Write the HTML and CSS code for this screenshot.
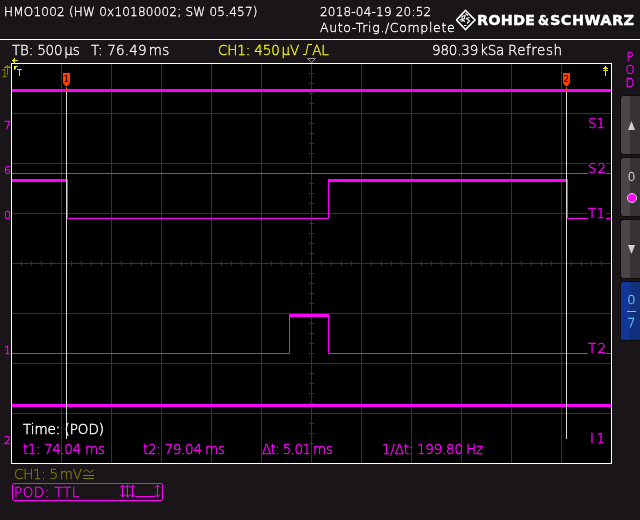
FILE: index.html
```
<!DOCTYPE html>
<html lang="en">
<head>
<meta charset="utf-8">
<title>HMO1002</title>
<link rel="stylesheet" href="styles.css">
</head>
<body>
<header class="header">
  <div class="model">HMO1002 (HW 0x10180002; SW 05.457)</div>
  <div class="state"><div class="date">2018-04-19 20:52</div><div class="trig">Auto-Trig./Complete</div></div>
  <svg class="brand" width="184" height="39" viewBox="456 0 184 39">
    <path class="diamond" d="M465.500 10.500 475 20 465.500 29.500 456.500 20Z"/>
    <path class="diamond-in" d="M462 22V16.500L465 15.500 464.500 18.500 462 19.500 465 21.500M469.500 17.500 466.500 18.500 469.500 21 467 23.500M464 25.500H466.500M465.500 13.500 468 15.500M459.500 20H461"/>
    <text class="logo" x="477" y="25" textLength="58" lengthAdjust="spacing">ROHDE</text>
    <text class="logo" x="538" y="25" textLength="11" lengthAdjust="spacingAndGlyphs">&amp;</text>
    <text class="logo" x="550" y="25" textLength="84" lengthAdjust="spacing">SCHWARZ</text>
  </svg>
</header>
<main class="main">
  <section class="screen">
    <div class="status">
      <span class="tb">TB: 500<i></i>µs</span>
      <span class="tpos">T: 76.49<i></i>ms</span>
      <span class="trigger">CH1: 450<i></i>µV <svg width="9" height="11" viewBox="0 0 9 11"><path d="M0 10.500H3L5 .5H9"/></svg>AL</span>
      <span class="rate">980.39<i></i>kSa</span>
      <span class="mode">Refresh</span>
    </div>
    <svg class="plot" width="612" height="408" viewBox="0 57 612 408">
      <defs>
        <pattern id="grid" x="11" y="63" width="50" height="50" patternUnits="userSpaceOnUse"><path class="grid" d="M.5 0V50M0 .5H50"/></pattern>
        <pattern id="tx" x="11" y="261" width="10" height="5" patternUnits="userSpaceOnUse"><path class="grid" d="M.5 0V5"/></pattern>
        <pattern id="ty" x="309" y="63" width="5" height="10" patternUnits="userSpaceOnUse"><path class="grid" d="M0 .5H5"/></pattern>
      </defs>
      <rect class="bg" x="11" y="63" width="601" height="401"/>
      <rect x="11" y="63" width="601" height="401" fill="url(#grid)"/>
      <rect x="11" y="261" width="601" height="5" fill="url(#tx)"/>
      <rect x="309" y="63" width="5" height="381" fill="url(#ty)"/>
      <g class="bg">
        <rect x="588" y="116" width="18" height="14"/><rect x="588" y="162" width="18" height="13"/>
        <rect x="588" y="207" width="18" height="13"/><rect x="588" y="342" width="18" height="13"/>
      </g>
      <g class="thick"><path d="M12 90.500H611M12 180.500H67M328 180.500H567M289 315.500H329M12 405.500H611"/></g>
      <g class="thin"><path d="M12 173.500H588M606 173.500H611M67.500 179V218.500H328.500V179M567.500 179V218.500H588M606 218.500H611M12 353.500H289.500V314M328.500 314V353.500H588M606 353.500H611"/></g>
      <g class="cursor"><path d="M66.500 92V439M566.500 92V439"/></g>
      <rect class="frame" x="11.500" y="63.500" width="600" height="400"/>
      <g class="flag"><path d="M63 73H70V83L67.500 86H65.500L63 83ZM563 73H570V83L567.500 86H565.500L563 83ZM66 87H67V92H66ZM566 87H567V92H566Z"/></g>
      <g class="flagtext"><text x="63.500" y="82">1</text><text x="563.500" y="82">2</text></g>
      <path class="pointer" d="M307.500 58.500H315.500L311.500 62.500Z"/>
      <g class="labels">
        <text x="588" y="128" textLength="17">S1</text><text x="588" y="173" textLength="18">S2</text>
        <text x="588" y="218" textLength="17">T1</text><text x="588" y="353" textLength="18">T2</text>
        <text x="590" y="443" textLength="15">I1</text>
      </g>
      <g class="bits">
        <text x="4" y="129">7</text><text x="4" y="174">6</text><text x="4" y="219">0</text><text x="4" y="354">1</text><text x="4" y="444">2</text>
      </g>
      <text class="ch" x="1" y="77">1</text>
      <path class="chline" d="M7.500 75V65M4 67.500H11M5 66.500H10"/>
      <path class="yellow" d="M12 60.500H18M14.500 58V63M13.500 59V62M14.500 66V70M14 66.500H18M15.500 66V69M17 69.500H22M19.500 69V76M603 70.500H608M605.500 66V76M604 67.500H607M603 68.500H608"/>
      <text class="readout white" x="23" y="434" textLength="81">Time: (POD)</text>
      <g class="readout">
        <text x="23" y="454" textLength="58">t1: 74.04</text><text x="85" y="454" textLength="20">ms</text>
        <text x="143" y="454" textLength="59">t2: 79.04</text><text x="205" y="454" textLength="20">ms</text>
        <text x="262" y="454" textLength="49">Δt: 5.01</text><text x="313" y="454" textLength="20">ms</text>
        <text x="382" y="454" textLength="81">1/Δt: 199.80</text><text x="466" y="454" textLength="17">Hz</text>
      </g>
    </svg>
    <footer class="footer">
      <div class="ch1">CH1: 5<i></i>mV <svg width="11" height="11" viewBox="0 0 11 11"><path d="M0 4.500 3 1.500 7 4.500 11 1.500M0 7.500H11M0 10.500H11"/></svg></div>
      <div class="pod"><span>POD: TTL</span>
        <svg width="42" height="14" viewBox="0 0 42 14"><path d="M2.500 1V13M0 3.500 2.500 1 5 3.500M0 10.500 2.500 13 5 10.500M7.500 1V13M5 3.500 7.500 1 10 3.500M5 10.500 7.500 13 10 10.500M12.500 1V13M10 3.500 12.500 1 15 3.500M10 10.500 12.500 13 15 10.500M15 12.500H35M37.500 1V13M35 3.500 37.500 1 40 3.500M35 10.500 37.500 13 40 10.500"/></svg>
      </div>
    </footer>
  </section>
  <aside class="side">
    <div class="podlabel"><span>P</span><span>O</span><span>D</span></div>
    <div class="key"><svg width="9" height="9" viewBox="0 0 9 9"><path d="M4.500 0 8 9H1Z"/></svg></div>
    <div class="key value"><span>0</span><b></b></div>
    <div class="key"><svg width="9" height="9" viewBox="0 0 9 9"><path d="M4.500 9 1 0H8Z"/></svg></div>
    <div class="key active"><span>0</span><hr><span>7</span></div>
  </aside>
</main>
</body>
</html>
```
FILE: styles.css
```
* { box-sizing: border-box; }
html { background: #1a1519; }
body {
  margin: 0; width: 640px; height: 520px; overflow: hidden;
  font-family: "DejaVu Sans", sans-serif; font-weight: 200; font-size: 12px;
  color: #fff;
  -webkit-text-stroke: .3px currentColor;
}
.header, .main { will-change: transform; }
i { display: inline-block; width: 2px; }
.header { display: flex; height: 40px; border-bottom: 1px solid #fff; white-space: nowrap; }
.model { width: 320px; padding: 5px 0 0 4px; line-height: 15px; letter-spacing: .22px; }
.state { width: 136px; padding-top: 5px; line-height: 15px; }
.date { letter-spacing: .2px; }
.trig { font-size: 12.500px; letter-spacing: .65px; }
.brand { display: block; }
.diamond { fill: none; stroke: #fff; stroke-width: 1.6; }
.diamond-in { fill: none; stroke: #fff; stroke-width: 1.1; }
.logo { font-size: 14.500px; font-weight: 700; fill: #fff; stroke: #fff; stroke-width: .4; }
.main { display: flex; }
.screen { width: 612px; }
.status { display: flex; height: 17px; padding-left: 12px; font-size: 13.500px; line-height: 20px; letter-spacing: -.2px; white-space: nowrap; }
.tb { width: 79px; }
.tpos { width: 127px; letter-spacing: .2px; }
.trigger { width: 214px; color: #ff0; letter-spacing: -.15px; }
.trigger svg { fill: none; stroke: #ff0; }
.rate { width: 76px; }
.mode { letter-spacing: .5px; }
.plot { display: block; }
.grid { stroke: #333; fill: none; }
.bg { fill: #000; }
.frame { fill: none; stroke: #fff; }
.cursor { stroke: #d8d8d8; }
.thick { stroke: #f0f; stroke-width: 3; }
.thin { stroke: #f0f; fill: none; }
.flag { fill: #ff4000; }
.flagtext { font-size: 9px; fill: #000; font-weight: 400; }
.pointer { fill: #1a1519; stroke: #999; }
.labels, .readout { font-size: 13.500px; fill: #f0f; stroke: #f0f; stroke-width: .4; }
.readout.white { fill: #fff; stroke: #fff; }
.bits { font-size: 11px; fill: #f0f; stroke: #f0f; stroke-width: .4; }
.ch { font-size: 11px; fill: #807d00; stroke: #807d00; stroke-width: .4; }
.chline { stroke: #807d00; }
.yellow { stroke: #e6e600; fill: none; }
.footer { padding: 0 0 0 12px; font-size: 13.500px; letter-spacing: -.3px; }
.ch1 { height: 18px; padding: 1px 0 0 2px; line-height: 17px; color: #807d00; white-space: nowrap; }
.ch1 svg { fill: none; stroke: #807d00; margin-left: -3px; }
.pod { display: flex; justify-content: space-between; width: 151px; height: 18px; padding: 0 0 0 1px; border: 1px solid #f0f; border-radius: 2px; color: #f0f; line-height: 17px; }
.pod span { letter-spacing: .5px; }
.pod svg { fill: none; stroke: #f0f; }
.side { width: 28px; padding-left: 8px; }
.podlabel { display: flex; flex-direction: column; align-items: center; height: 55px; padding-top: 11px; color: #f0f; font-size: 11.500px; line-height: 13px; }
.key { display: flex; flex-direction: column; align-items: center; justify-content: center; height: 60px; margin-bottom: 2px; padding-left: 2px; border: 1px solid #0f0d0f; border-right: 0; border-radius: 3px 0 0 3px; background: linear-gradient(90deg, #494549 9px, #353135 9px); }
.key svg { fill: #d0d0d0; }
.value { color: #ddd; gap: 8px; padding-bottom: 2px; }
.value span { line-height: 15px; }
.value b { width: 10px; height: 10px; border: 1px solid #ddd; border-radius: 50%; background: #f0f; }
.active { background: linear-gradient(90deg, #12369a 9px, #12307c 9px); color: #66ccff; font-size: 13px; line-height: 20px; }
.active hr { width: 9px; margin: 1px 0; border: 0; border-top: 1px solid #66ccff; }
```
